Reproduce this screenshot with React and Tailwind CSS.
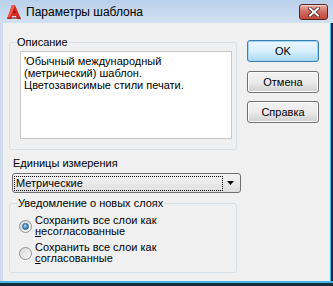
const font = "font-['Liberation_Sans',Arial,sans-serif]"

function AcadIcon() {
  return (
    <svg width="16" height="16" viewBox="0 0 16 16" className="shrink-0">
      <path d="M6 1 L9 1 L15 15 L11 15 L10 12 L6 12 L5 15 L1 15 Z" fill="#d42a22" />
      <path d="M6 1 L9 1 L8 4 L3 15 L1 15 Z" fill="#f05a4a" />
      <path d="M7 9 L9.5 9 L8.4 5.5 Z" fill="#8a1010" />
      <path d="M1 15 L15 15 L14 13 L2 13 Z" fill="#9c1a14" opacity="0.6" />
    </svg>
  )
}

function CloseButton() {
  return (
    <div className="w-[29px] h-[16px] rounded-[3px] border border-[#5a2424] bg-gradient-to-b from-[#e6b1a8] via-[#d06a5e] to-[#c2473a] flex items-center justify-center shadow-[inset_0_1px_0_rgba(255,255,255,0.5)]">
      <svg width="12" height="10" viewBox="0 0 12 10">
        <path d="M2 1.5 L10 8.5 M10 1.5 L2 8.5" stroke="#4a2020" strokeWidth="3.6" strokeLinecap="square" />
        <path d="M2 1.5 L10 8.5 M10 1.5 L2 8.5" stroke="#ffffff" strokeWidth="2" strokeLinecap="square" />
      </svg>
    </div>
  )
}

function Button({ children, primary }) {
  return (
    <div
      className={
        'w-[72px] h-[22px] rounded-[3px] border flex items-center justify-center text-[11px] text-black ' +
        (primary
          ? 'border-[#3c7fb1] bg-gradient-to-b from-[#eaf6fd] via-[#d9f0fc] to-[#a7d9f5] shadow-[inset_0_0_0_1px_#9ed6f4]'
          : 'border-[#707070] bg-gradient-to-b from-[#f2f2f2] via-[#ebebeb] to-[#cfcfcf] shadow-[inset_0_0_0_1px_#fcfcfc]')
      }
    >
      {children}
    </div>
  )
}

function Radio({ checked }) {
  return (
    <div className="w-[13px] h-[13px] rounded-full border border-[#8e8f8f] bg-gradient-to-br from-[#d6d6d6] to-[#fbfbfb] flex items-center justify-center shrink-0">
      {checked && (
        <div className="w-[7px] h-[7px] rounded-full bg-[radial-gradient(circle_at_40%_35%,#b5e3fb_0%,#4f97cc_45%,#1b5c95_100%)] border border-[#2a5e8c]" />
      )}
    </div>
  )
}

export default function App() {
  return (
    <div className={`w-[333px] h-[286px] flex flex-col bg-[#c8daef] ${font}`}>
      {/* title bar */}
      <div className="h-[23px] flex items-center pl-[6px] pr-[5px] bg-gradient-to-b from-[#b9d0ea] to-[#d2e1f2]">
        <AcadIcon />
        <span className="ml-[4px] text-[12px] text-black">Параметры шаблона</span>
        <div className="ml-auto">
          <CloseButton />
        </div>
      </div>

      <div className="flex-1 flex">
        <div className="w-[3px] bg-[#cfdcec]" />
        <div className="flex-1 flex bg-[#f0f0f0] text-[11px] text-black">
          {/* left column */}
          <div className="w-[232px] ml-[6px] flex flex-col">
            <fieldset className="mt-[13px] w-[228px] border border-[#d5dfe5] rounded-[3px] pb-[10px]">
              <legend className="ml-[6px] px-[1px] leading-[13px]">Описание</legend>
              <div className="ml-[10px] mt-[2px] w-[212px] h-[88px] bg-white border border-[#c5c9ce] pl-[3px] pt-[3px] leading-[12px]">
                'Обычный международный
                <br />
                (метрический) шаблон.
                <br />
                Цветозависимые стили печати.
              </div>
            </fieldset>

            <div className="mt-[7px] ml-[4px] leading-[13px]">Единицы измерения</div>

            <div className="mt-[3px] ml-[3px] w-[229px] h-[20px] rounded-[3px] border border-[#707070] bg-gradient-to-b from-[#f2f2f2] via-[#ebebeb] to-[#dddddd] flex items-center pl-[1px] pr-[6px]">
              <div className="w-[209px] h-[15px] border border-dotted border-black flex items-center pl-[1px] leading-[13px]">
                Метрические
              </div>
              <svg width="7" height="4" viewBox="0 0 7 4" className="ml-auto">
                <path d="M0 0 L7 0 L3.5 4 Z" fill="#000" />
              </svg>
            </div>

            <fieldset className="mt-[4px] w-[228px] border border-[#d5dfe5] rounded-[3px] pb-[8px]">
              <legend className="ml-[7px] px-[1px] leading-[13px]">Уведомление о новых слоях</legend>
              <div className="flex items-center ml-[9px] mt-[5px]">
                <Radio checked />
                <div className="ml-[3px] leading-[11px]">
                  Сохранить все слои как
                  <br />
                  <span className="underline">н</span>есогласованные
                </div>
              </div>
              <div className="flex items-center ml-[9px] mt-[5px]">
                <Radio />
                <div className="ml-[3px] leading-[11px]">
                  Сохранить все слои как
                  <br />
                  <span className="underline">с</span>огласованные
                </div>
              </div>
            </fieldset>
          </div>

          {/* right column */}
          <div className="ml-[6px] flex flex-col pt-[17px]">
            <Button primary>OK</Button>
            <div className="mt-[9px]">
              <Button>Отмена</Button>
            </div>
            <div className="mt-[8px]">
              <Button>Справка</Button>
            </div>
          </div>
        </div>
        <div className="w-[3px] flex">
          <div className="w-[1px] bg-[#40b6ea]" />
          <div className="w-[2px] bg-[#1c2a38]" />
        </div>
      </div>
      <div className="h-[5px] flex flex-col">
        <div className="h-[2px] bg-[#40b6ea]" />
        <div className="h-[3px] bg-[#1c2a38]" />
      </div>
    </div>
  )
}
